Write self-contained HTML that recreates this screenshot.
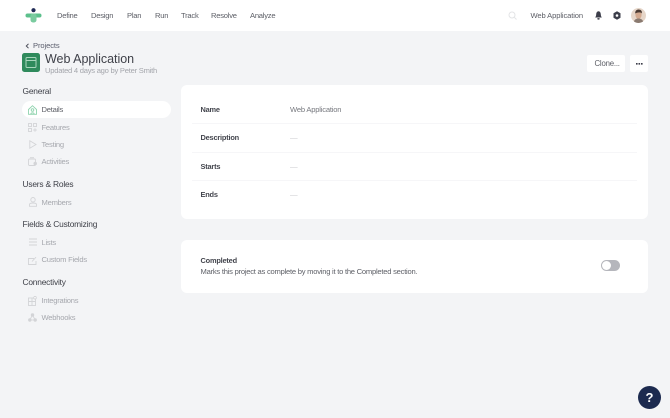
<!DOCTYPE html>
<html><head><meta charset="utf-8"><style>
html,body{margin:0;padding:0}
body{width:670px;height:418px;overflow:hidden;background:#f3f4f6;position:relative;font-family:"Liberation Sans",sans-serif;color:#4b4d55}
.t{position:absolute;white-space:nowrap;line-height:12px;font-size:7.6px;letter-spacing:-.24px}
.top{position:absolute;left:0;top:0;width:670px;height:31px;background:#fff}
.nav{color:#5c5e66;top:10px;font-size:7.6px;letter-spacing:-.24px}
.side{color:#a6a8ae}
.h{color:#3d3f47;font-size:8.4px;letter-spacing:-.2px}
.card{position:absolute;left:181px;width:467px;background:#fff;border-radius:6px}
.hr{position:absolute;left:192px;width:445px;height:1px;background:#f6f6f8}
.lab{left:200.500px;font-weight:bold;color:#44464e;font-size:7.4px;letter-spacing:-.2px}
.val{left:290px;color:#77797f;letter-spacing:-.2px}
.dash{left:290px;color:#c9cacd}
svg{position:absolute}
</style></head><body>
<div class="top"></div>
<svg style="left:25px;top:8px" width="18" height="15" viewBox="0 0 18 15"><circle cx="8.500" cy="2.200" r="2.100" fill="#1f2a55"/><rect x="0.500" y="5.500" width="16" height="4" rx="2" fill="#5cc08c"/><rect x="5.500" y="5.500" width="6" height="9" rx="2.500" fill="#7acb9f"/></svg>
<div class="t nav" style="left:57px">Define</div>
<div class="t nav" style="left:91px">Design</div>
<div class="t nav" style="left:127px">Plan</div>
<div class="t nav" style="left:155px">Run</div>
<div class="t nav" style="left:181px">Track</div>
<div class="t nav" style="left:211px">Resolve</div>
<div class="t nav" style="left:250px">Analyze</div>
<svg style="left:508px;top:11px" width="9" height="9" viewBox="0 0 9 9" fill="none" stroke="#e3e4e6" stroke-width="1"><circle cx="4" cy="4" r="3"/><path d="M6.200 6.200L8.500 8.500"/></svg>
<div class="t nav" style="left:530.500px;letter-spacing:-.12px">Web Application</div>
<svg style="left:595px;top:11px" width="7" height="9" viewBox="0 0 7 9"><path d="M3.500 0.300C1.700 0.500 1.300 2 1.200 3.500C1.100 5 .7 5.700 .2 6.500H6.800C6.300 5.700 5.900 5 5.800 3.500C5.700 2 5.300 .5 3.500 .3Z" fill="#3c3e4a"/><rect x="2.300" y="7.100" width="2.400" height="1.500" rx=".7" fill="#3c3e4a"/></svg>
<svg style="left:613px;top:11px" width="8" height="9" viewBox="0 0 8 9"><path d="M4 .2L7.500 2.300V6.700L4 8.800L.5 6.700V2.300Z" fill="#3c3e4a"/><circle cx="4" cy="4.500" r="1.300" fill="#fff"/></svg>
<svg style="left:631px;top:8px" width="15" height="15" viewBox="0 0 15 15"><defs><clipPath id="c"><circle cx="7.500" cy="7.500" r="7.500"/></clipPath></defs><g clip-path="url(#c)"><rect width="15" height="15" fill="#e6d6c9"/><ellipse cx="7.500" cy="6.800" rx="3.100" ry="4" fill="#d3a98f"/><path d="M4.200 5.500C4 2.500 6 1.500 7.500 1.500C10 1.500 11.300 3 10.800 5.500C10 4 7 4 4.200 5.500Z" fill="#4a3a32"/><path d="M2.500 15C3 11.500 5 10.500 7.500 10.500C10 10.500 12 11.500 12.500 15Z" fill="#8a7a70"/></g></svg>

<svg style="left:25px;top:42.500px" width="5" height="6" viewBox="0 0 5 6"><path d="M3.500 .8L1.300 3L3.500 5.200" fill="none" stroke="#4a4c58" stroke-width="1"/></svg>
<div class="t" style="left:33px;top:39.500px;color:#5a5d6c;letter-spacing:-.1px">Projects</div>
<svg style="left:22px;top:53px" width="18" height="19" viewBox="0 0 18 19"><rect width="18" height="19" rx="2.500" fill="#2f8a5c"/><rect x="4" y="4.500" width="10" height="10" rx="1" fill="none" stroke="#a9d6bd" stroke-width="1"/><path d="M4 7.500H14" stroke="#a9d6bd" stroke-width="1"/></svg>
<div class="t" style="left:45px;top:52px;font-size:12.500px;line-height:15px;letter-spacing:-.02px;color:#3f4149">Web Application</div>
<div class="t" style="left:45px;top:65px;color:#a4a6ac">Updated 4 days ago by Peter Smith</div>
<div style="position:absolute;left:587px;top:55px;width:38px;height:17px;background:#fff;border-radius:2px"></div>
<div class="t" style="left:594.500px;top:57.500px;color:#5c5e66;font-size:7.800px;letter-spacing:-.2px">Clone...</div>
<div style="position:absolute;left:630px;top:55px;width:18px;height:17px;background:#fff;border-radius:2px"></div>
<svg style="left:636px;top:62.500px" width="7" height="2" viewBox="0 0 7 2"><path d="M0 0h1.600v1.600H0zM2.500 0h1.600v1.600H2.500zM5 0h1.600v1.600H5z" fill="#3c3e4a"/></svg>

<div class="t h" style="left:22.500px;top:85px">General</div>
<div style="position:absolute;left:22px;top:101px;width:149px;height:17px;background:#fff;border-radius:9px"></div>
<svg style="left:28px;top:104.500px" width="9" height="10" viewBox="0 0 9 10" fill="none" stroke="#8fd3ae" stroke-width=".9"><path d="M.5 4.500L4.500 .7L8.500 4.500V9.300H.5Z"/><circle cx="4.500" cy="5" r="1.300"/><path d="M2.800 9C3 7.500 6 7.500 6.200 9"/></svg>
<div class="t" style="left:41.500px;top:104px;color:#5f6168">Details</div>
<svg style="left:28px;top:122.500px" width="9" height="9" viewBox="0 0 9 9" fill="none" stroke="#d3d4d7" stroke-width=".9"><rect x=".5" y=".5" width="3" height="3"/><rect x="5.500" y=".5" width="3" height="3"/><rect x=".5" y="5.500" width="3" height="3"/><path d="M7 5.200V8.800M5.200 7H8.800"/></svg>
<div class="t side" style="left:41.500px;top:121.500px">Features</div>
<svg style="left:28.500px;top:139.500px" width="8" height="9" viewBox="0 0 8 9" fill="none" stroke="#d3d4d7" stroke-width=".9"><path d="M.8 .8L7 4.500L.8 8.200Z"/></svg>
<div class="t side" style="left:41.500px;top:138.500px">Testing</div>
<svg style="left:28px;top:157px" width="9" height="9" viewBox="0 0 9 9" fill="none" stroke="#d3d4d7" stroke-width=".9"><rect x=".5" y="2" width="7" height="6.500" rx="1"/><path d="M2 .7H6"/><circle cx="7.200" cy="6.500" r="1.300" fill="#d3d4d7"/></svg>
<div class="t side" style="left:41.500px;top:156px">Activities</div>
<div class="t h" style="left:22.500px;top:178px">Users &amp; Roles</div>
<svg style="left:28.500px;top:197px" width="8" height="10" viewBox="0 0 8 10" fill="none" stroke="#d3d4d7" stroke-width=".9"><circle cx="4" cy="2.700" r="2.200"/><path d="M.5 9.300V7.500C.5 6.500 2 6 4 6C6 6 7.500 6.500 7.500 7.500V9.300Z"/></svg>
<div class="t side" style="left:41.500px;top:196.500px">Members</div>
<div class="t h" style="left:22.500px;top:218px">Fields &amp; Customizing</div>
<svg style="left:28.500px;top:238px" width="8" height="8" viewBox="0 0 8 8" fill="none" stroke="#d3d4d7" stroke-width=".9"><path d="M0 1H8M0 4H8M0 7H8"/></svg>
<div class="t side" style="left:41.500px;top:237px">Lists</div>
<svg style="left:28px;top:255.500px" width="9" height="9" viewBox="0 0 9 9" fill="none" stroke="#d3d4d7" stroke-width=".9"><path d="M6 2.500H.5V8.500H8V5"/><path d="M4 5.500L8 1.200"/></svg>
<div class="t side" style="left:41.500px;top:254px">Custom Fields</div>
<div class="t h" style="left:22.500px;top:276px">Connectivity</div>
<svg style="left:28px;top:295.500px" width="9" height="10" viewBox="0 0 9 10" fill="none" stroke="#d3d4d7" stroke-width=".9"><rect x=".5" y="2" width="7" height="7.500"/><path d="M.5 5.500H7.500M4 2V9.500"/><circle cx="7" cy="1.700" r="1.300" fill="#fff"/></svg>
<div class="t side" style="left:41.500px;top:294.500px">Integrations</div>
<svg style="left:28px;top:313px" width="9" height="9" viewBox="0 0 9 9" fill="#d3d4d7"><circle cx="4.500" cy="2" r="1.700"/><circle cx="1.800" cy="7" r="1.700"/><circle cx="7.200" cy="7" r="1.700"/><path d="M4.500 2L1.800 7H7.200Z" fill="none" stroke="#d3d4d7" stroke-width=".8"/></svg>
<div class="t side" style="left:41.500px;top:312px">Webhooks</div>

<div class="card" style="top:85px;height:134px"></div>
<div class="hr" style="top:123px"></div><div class="hr" style="top:152px"></div><div class="hr" style="top:180px"></div>
<div class="t lab" style="top:104px">Name</div><div class="t val" style="top:104px">Web Application</div>
<div class="t lab" style="top:132px">Description</div><div class="t dash" style="top:132px">—</div>
<div class="t lab" style="top:160.500px">Starts</div><div class="t dash" style="top:160.500px">—</div>
<div class="t lab" style="top:189px">Ends</div><div class="t dash" style="top:189px">—</div>
<div class="card" style="top:240px;height:53px"></div>
<div class="t lab" style="top:255px">Completed</div>
<div class="t" style="left:200.500px;top:265.500px;color:#5f6168">Marks this project as complete by moving it to the Completed section.</div>
<div style="position:absolute;left:601px;top:260px;width:19px;height:11px;background:#b5b6bc;border-radius:6px"></div>
<div style="position:absolute;left:602px;top:261px;width:9px;height:9px;background:#fff;border-radius:50%"></div>
<div style="position:absolute;left:638px;top:386px;width:23px;height:23px;background:#1c2a4f;border-radius:50%;color:#fff;font-weight:bold;font-size:13px;line-height:23px;text-align:center">?</div>
</body></html>
